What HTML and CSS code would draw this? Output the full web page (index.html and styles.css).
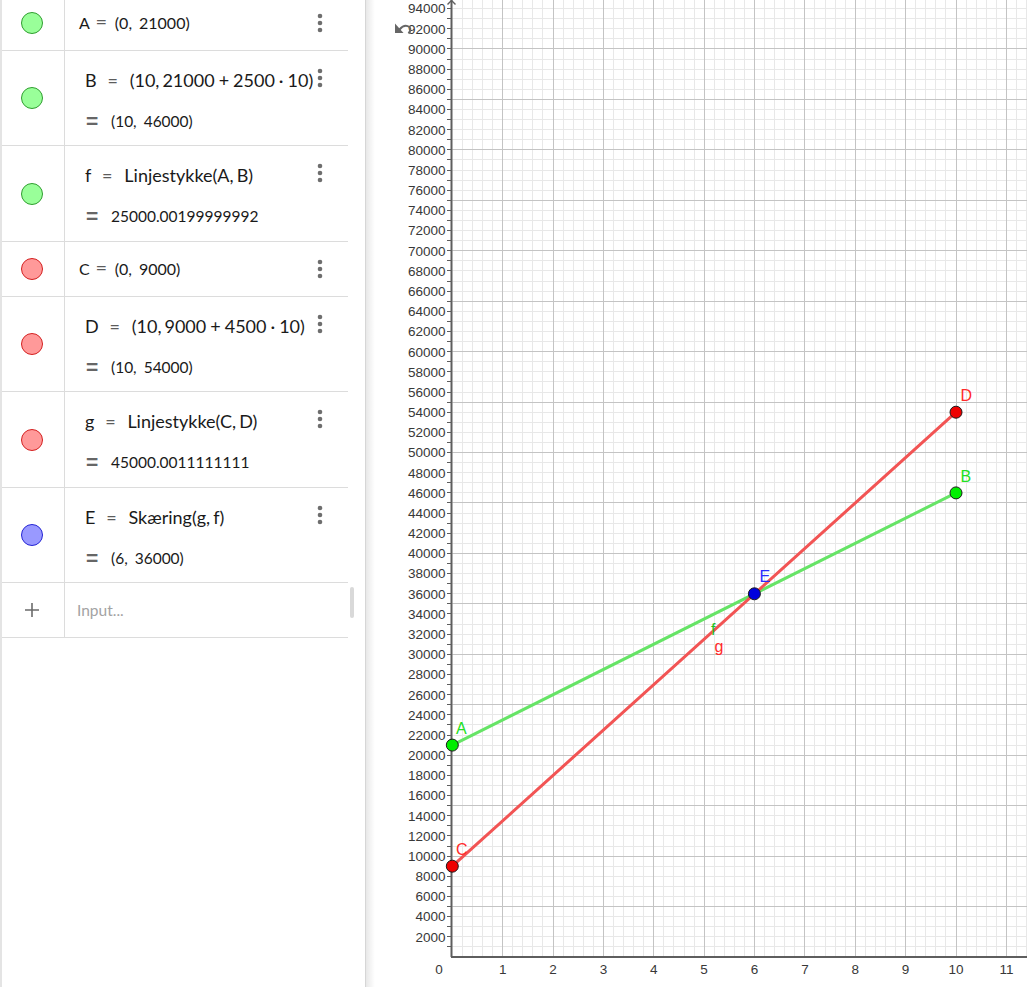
FILE: index.html
```html
<!DOCTYPE html>
<html lang="da">
<head>
<meta charset="utf-8">
<title>GeoGebra</title>
<link rel="stylesheet" href="styles.css">
</head>
<body>
<div class="app">
  <aside class="algebra">
    <div class="rows">
      <div class="row first">
        <div class="icon"><span class="ball green"></span></div>
        <div class="content single"><span class="plain">A<span class="op">=</span>(0,<span class="csp"></span>21000)</span></div>
        <div class="menu"><svg class="dots" width="6" height="20" viewBox="0 0 6 20"><circle cx="3" cy="3" r="2.3"/><circle cx="3" cy="10" r="2.3"/><circle cx="3" cy="17" r="2.3"/></svg></div>
      </div>
      <div class="row double">
        <div class="icon"><span class="ball green"></span></div>
        <div class="content two">
          <div class="tex">B<span class="teq">=</span>(10,<span class="thin"></span>21000<span class="bin">+</span>2500<span class="bin">·</span>10)</div>
          <div class="value"><span class="eq">=</span>(10,<span class="csp"></span>46000)</div>
        </div>
        <div class="menu upper"><svg class="dots" width="6" height="20" viewBox="0 0 6 20"><circle cx="3" cy="3" r="2.3"/><circle cx="3" cy="10" r="2.3"/><circle cx="3" cy="17" r="2.3"/></svg></div>
      </div>
      <div class="row double tall">
        <div class="icon"><span class="ball green"></span></div>
        <div class="content two">
          <div class="tex">f<span class="teq">=</span>Linjestykke(A,<span class="thin"></span>B)</div>
          <div class="value"><span class="eq">=</span>25000.00199999992</div>
        </div>
        <div class="menu upper"><svg class="dots" width="6" height="20" viewBox="0 0 6 20"><circle cx="3" cy="3" r="2.3"/><circle cx="3" cy="10" r="2.3"/><circle cx="3" cy="17" r="2.3"/></svg></div>
      </div>
      <div class="row">
        <div class="icon"><span class="ball red"></span></div>
        <div class="content single"><span class="plain">C<span class="op">=</span>(0,<span class="csp"></span>9000)</span></div>
        <div class="menu"><svg class="dots" width="6" height="20" viewBox="0 0 6 20"><circle cx="3" cy="3" r="2.3"/><circle cx="3" cy="10" r="2.3"/><circle cx="3" cy="17" r="2.3"/></svg></div>
      </div>
      <div class="row double">
        <div class="icon"><span class="ball red"></span></div>
        <div class="content two">
          <div class="tex">D<span class="teq">=</span>(10,<span class="thin"></span>9000<span class="bin">+</span>4500<span class="bin">·</span>10)</div>
          <div class="value"><span class="eq">=</span>(10,<span class="csp"></span>54000)</div>
        </div>
        <div class="menu upper"><svg class="dots" width="6" height="20" viewBox="0 0 6 20"><circle cx="3" cy="3" r="2.3"/><circle cx="3" cy="10" r="2.3"/><circle cx="3" cy="17" r="2.3"/></svg></div>
      </div>
      <div class="row double tall">
        <div class="icon"><span class="ball red"></span></div>
        <div class="content two">
          <div class="tex">g<span class="teq">=</span>Linjestykke(C,<span class="thin"></span>D)</div>
          <div class="value"><span class="eq">=</span>45000.0011111111</div>
        </div>
        <div class="menu upper"><svg class="dots" width="6" height="20" viewBox="0 0 6 20"><circle cx="3" cy="3" r="2.3"/><circle cx="3" cy="10" r="2.3"/><circle cx="3" cy="17" r="2.3"/></svg></div>
      </div>
      <div class="row double">
        <div class="icon"><span class="ball blue"></span></div>
        <div class="content two">
          <div class="tex">E<span class="teq">=</span>Skæring(g,<span class="thin"></span>f)</div>
          <div class="value"><span class="eq">=</span>(6,<span class="csp"></span>36000)</div>
        </div>
        <div class="menu upper"><svg class="dots" width="6" height="20" viewBox="0 0 6 20"><circle cx="3" cy="3" r="2.3"/><circle cx="3" cy="10" r="2.3"/><circle cx="3" cy="17" r="2.3"/></svg></div>
      </div>
      <div class="row input">
        <div class="icon"><svg width="16" height="16" viewBox="0 0 16 16"><path d="M8 1v14M1 8h14" stroke="#6b6b6b" stroke-width="1.6" fill="none"/></svg></div>
        <div class="content single"><span class="placeholder">Input...</span></div>
        <div class="menu"></div>
      </div>
    </div>
    <div class="scrollbar"></div>
  </aside>
  <main class="graphics">
    <svg class="plot" width="661" height="987" viewBox="366 0 661 987">
      <defs>
        <linearGradient id="shade" x1="0" x2="1" y1="0" y2="0">
          <stop offset="0" stop-color="#000" stop-opacity="0.09"/>
          <stop offset="1" stop-color="#000" stop-opacity="0"/>
        </linearGradient>
      </defs>
      <g id="grid"></g>
      <g id="axes">
        <line class="axis" x1="451.5" y1="0" x2="451.5" y2="957"/>
        <line class="axis" x1="451" y1="957" x2="1027" y2="957"/>
        <polyline class="axis-arrow" points="447.5,4.5 451.5,0.5 455.5,4.5"/>
      </g>
      <g id="ticks"></g>
      <g id="labels"></g>
      <line class="seg seg-f" x1="452.3" y1="745.1" x2="956" y2="492.9"/>
      <line class="seg seg-g" x1="452.3" y1="866.2" x2="956" y2="412.2"/>
      <circle class="pt pt-green" cx="452.3" cy="745.1" r="6"/>
      <circle class="pt pt-green" cx="956" cy="492.9" r="6"/>
      <circle class="pt pt-red" cx="452.3" cy="866.2" r="6"/>
      <circle class="pt pt-red" cx="956" cy="412.2" r="6"/>
      <circle class="pt pt-blue" cx="754.4" cy="593.8" r="6"/>
      <text class="plabel green-t" x="456" y="734">A</text>
      <text class="plabel green-t" x="960.5" y="482">B</text>
      <text class="plabel red-t" x="456" y="855">C</text>
      <text class="plabel red-t" x="960.5" y="401">D</text>
      <text class="plabel blue-t" x="759.5" y="582">E</text>
      <text class="plabel f-t" x="711" y="635">f</text>
      <text class="plabel red-t" x="714.5" y="652">g</text>
      <g class="home-icon">
        <polygon points="395,23.5 395,33 403.5,33"/>
        <path d="M399.5 29.5 Q404.5 23.5 409.5 27 Q411.5 30 408.5 33.5" fill="none" stroke="#666" stroke-width="2"/>
      </g>
      <rect x="366" y="0" width="9" height="987" fill="url(#shade)"/>
    </svg>
  </main>
</div>
<script src="script.js"></script>
</body>
</html>
```

FILE: styles.css
```css
* { box-sizing: border-box; }

html, body {
  margin: 0;
  padding: 0;
  background: #ffffff;
}

body {
  width: 1027px;
  height: 987px;
  overflow: hidden;
  font-family: Lato, "Liberation Sans", sans-serif;
  color: #1a1a1a;
}

.app {
  display: flex;
  height: 987px;
}

/* ---------- Algebra view ---------- */
.algebra {
  position: relative;
  flex: none;
  width: 366px;
  height: 987px;
  border-left: 2px solid #e4e4e4;
  border-right: 1px solid #d6d6d6;
  overflow: hidden;
  background: #fff;
}

.rows {
  width: 346px;
  margin-top: -5px;
  display: flex;
  flex-direction: column;
}

.row {
  display: grid;
  grid-template-columns: 63px minmax(0, 1fr) 40px;
  height: 55px;
  border-bottom: 1px solid #dcdcdc;
}

.row.first { height: 56px; }
.row.double { height: 95px; }
.row.double.tall { height: 96px; }

.icon {
  display: flex;
  align-items: center;
  justify-content: center;
  padding-right: 2px;
  border-right: 1px solid #dcdcdc;
}

.ball {
  display: block;
  width: 22px;
  height: 22px;
  border-radius: 50%;
  border: 1px solid;
}
.ball.green { background: #99ff99; border-color: #2f9e2f; }
.ball.red { background: #ff9999; border-color: #d42020; }
.ball.blue { background: #9999ff; border-color: #2424d4; }

.content {
  min-width: 0;
  white-space: nowrap;
  overflow: visible;
  padding-left: 14px;
}

.content.single {
  display: flex;
  align-items: center;
}

.content.two {
  display: flex;
  flex-direction: column;
  gap: 17px;
  padding-top: 17px;
}

.plain {
  font-size: 16px;
  line-height: 24px;
}

.op {
  display: inline-block;
  width: 13px;
  text-align: center;
  color: #5c5c5c;
  font-size: 20px;
  line-height: 20px;
  margin: 0 7px 0 5px;
}

.csp {
  display: inline-block;
  width: 7px;
}

.tex {
  margin-left: 6px;
  font-size: 18px;
  line-height: 24px;
  height: 24px;
}

.teq {
  display: inline-block;
  width: 12px;
  text-align: center;
  color: #5c5c5c;
  margin: 0 11px 0 10px;
}

.bin {
  margin: 0 4px;
}

.thin {
  display: inline-block;
  width: 3px;
}

.value {
  margin-left: 7px;
  font-size: 15.5px;
  line-height: 24px;
  height: 24px;
}

.eq {
  display: inline-block;
  width: 13px;
  margin-right: 12px;
  color: #666;
  font-family: "Liberation Sans", Arial, sans-serif;
  font-weight: 700;
  font-size: 21px;
  line-height: 24px;
  vertical-align: top;
}

.placeholder {
  margin-left: -2px;
  font-size: 15.5px;
  color: #a3a3a3;
}

.menu {
  display: flex;
  align-items: center;
  padding-left: 9px;
}

.menu.upper {
  align-items: flex-start;
  padding-top: 17px;
}

.dots { fill: #6e6e6e; display: block; flex: none; }

.scrollbar {
  position: absolute;
  left: 348px;
  top: 587px;
  width: 4px;
  height: 31px;
  border-radius: 2px;
  background: #d9d9d9;
}

/* ---------- Graphics view ---------- */
.graphics {
  flex: 1;
  height: 987px;
  position: relative;
}

.plot { display: block; }

.minor { stroke: #e8e8e8; stroke-width: 1; }
.major { stroke: #c4c4c4; stroke-width: 1; }

.axis { stroke: #5e5e5e; stroke-width: 2; }
.axis-arrow { stroke: #5e5e5e; stroke-width: 1.4; fill: none; }
.tick { stroke: #5e5e5e; stroke-width: 1; }

.ylab, .xlab {
  font-family: "Liberation Sans", Arial, sans-serif;
  font-size: 13.5px;
  fill: #383838;
}
.ylab { text-anchor: end; }
.xlab { text-anchor: middle; }

.seg { stroke-width: 3; stroke-linecap: round; }
.seg-f { stroke: #66e466; }
.seg-g { stroke: #f25454; }

.pt { stroke: #1a1a1a; stroke-width: 1; }
.pt-green { fill: #00ee00; }
.pt-red { fill: #ee0000; }
.pt-blue { fill: #0000dd; }

.plabel {
  font-family: "Liberation Sans", Arial, sans-serif;
  font-size: 16px;
}
.green-t { fill: #22e022; }
.red-t { fill: #ff2a2a; }
.blue-t { fill: #2a2aff; }
.f-t { fill: #22c022; }

.home-icon polygon { fill: #666; }
```

FILE: script.js
```js
(function () {
  var NS = 'http://www.w3.org/2000/svg';
  var X0 = 452.3, SX = 50.37, Y0 = 957, SY = 0.010089;
  var RIGHT = 1027;
  function X(u) { return X0 + SX * u; }
  function Y(v) { return Y0 - SY * v; }
  function px(v) { return Math.round(v - 0.5) + 0.5; }
  function line(g, x1, y1, x2, y2, cls) {
    var l = document.createElementNS(NS, 'line');
    l.setAttribute('x1', x1); l.setAttribute('y1', y1);
    l.setAttribute('x2', x2); l.setAttribute('y2', y2);
    l.setAttribute('class', cls);
    g.appendChild(l);
  }
  function text(g, x, y, s, cls) {
    var t = document.createElementNS(NS, 'text');
    t.setAttribute('x', x); t.setAttribute('y', y);
    t.setAttribute('class', cls);
    t.textContent = s;
    g.appendChild(t);
  }
  var grid = document.getElementById('grid');
  var ticks = document.getElementById('ticks');
  var labels = document.getElementById('labels');
  var k, x, y;
  for (k = 1; X(k * 0.2) <= RIGHT + 1; k++) {
    if (k % 5 === 0) continue;
    x = px(X(k * 0.2));
    line(grid, x, 0, x, Y0, 'minor');
  }
  for (k = 1; Y(k * 1000) >= -1; k++) {
    if (k % 5 === 0) continue;
    y = px(Y(k * 1000));
    line(grid, X0, y, RIGHT, y, 'minor');
  }
  for (k = 1; X(k) <= RIGHT + 1; k++) {
    x = px(X(k));
    line(grid, x, 0, x, Y0, 'major');
  }
  for (k = 1; Y(k * 5000) >= -1; k++) {
    y = px(Y(k * 5000));
    line(grid, X0, y, RIGHT, y, 'major');
  }
  for (k = 1; Y(k * 1000) >= 0; k++) {
    y = px(Y(k * 1000));
    line(ticks, 447, y, 451, y, 'tick');
  }
  for (k = 1; Y(k * 2000) >= 0; k++) {
    text(labels, 445.5, (Y(k * 2000) + 4.8).toFixed(1), String(k * 2000), 'ylab');
  }
  text(labels, 439, 974, '0', 'xlab');
  for (k = 1; k <= 11; k++) {
    text(labels, X(k).toFixed(1), 974, String(k), 'xlab');
  }
})();
```
